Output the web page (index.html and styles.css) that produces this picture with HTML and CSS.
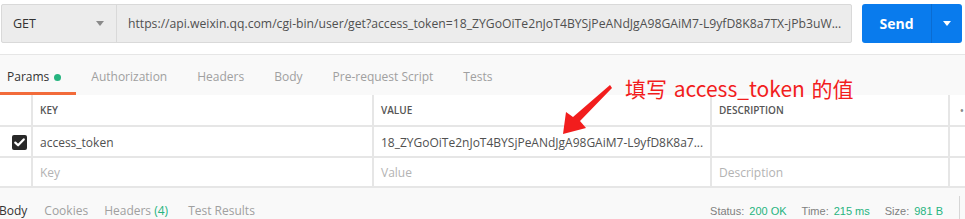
FILE: index.html
```html
<!DOCTYPE html>
<html lang="zh">
<head>
<meta charset="utf-8">
<title>Postman</title>
<link rel="stylesheet" href="styles.css">
</head>
<body>
<div class="page">
  <div class="topbar">
    <div class="req">
      <div class="method"><span>GET</span><span class="caret caret-gray"></span></div>
      <div class="url">https://api.weixin.qq.com/cgi-bin/user/get?access_token=18_ZYGoOiTe2nJoT4BYSjPeANdJgA98GAiM7-L9yfD8K8a7TX-jPb3uW...</div>
    </div>
    <div class="send">
      <span class="send-label">Send</span>
      <span class="send-drop"><span class="caret caret-white"></span></span>
    </div>
  </div>

  <div class="tabs">
    <div class="tab active">Params<span class="dot"></span></div>
    <div class="tab">Authorization</div>
    <div class="tab">Headers</div>
    <div class="tab">Body</div>
    <div class="tab">Pre-request Script</div>
    <div class="tab">Tests</div>
  </div>

  <div class="table">
    <div class="cell"></div>
    <div class="cell head">KEY</div>
    <div class="cell head">VALUE</div>
    <div class="cell head">DESCRIPTION</div>
    <div class="cell head more">•</div>

    <div class="cell check-cell"><span class="checkbox"><svg width="11" height="9" viewBox="0 0 11 9"><path d="M1.3 4.6 L4.1 7.3 L9.7 1.4" fill="none" stroke="#fff" stroke-width="2.2" stroke-linecap="round" stroke-linejoin="round"/></svg></span></div>
    <div class="cell row1">access_token</div>
    <div class="cell row1">18_ZYGoOiTe2nJoT4BYSjPeANdJgA98GAiM7-L9yfD8K8a7...</div>
    <div class="cell"></div>
    <div class="cell"></div>

    <div class="cell"></div>
    <div class="cell ph">Key</div>
    <div class="cell ph">Value</div>
    <div class="cell ph">Description</div>
    <div class="cell"></div>
  </div>

  <div class="resbar">
    <div class="restabs">
      <span class="rtab active">Body</span>
      <span class="rtab r-cookies">Cookies</span>
      <span class="rtab r-headers">Headers <span class="green">(4)</span></span>
      <span class="rtab r-tests">Test Results</span>
    </div>
    <div class="stats">
      <span class="stat"><span class="lbl">Status:</span><span class="green">200 OK</span></span>
      <span class="stat"><span class="lbl">Time:</span><span class="green">215 ms</span></span>
      <span class="stat"><span class="lbl">Size:</span><span class="green">981 B</span></span>
      <span class="vline"></span>
    </div>
  </div>

  <div class="note">填写 access_token 的值</div>
  <svg class="arrow" width="60" height="60" viewBox="555 80 60 60">
    <polygon points="610,85 612,88 580,121 586,128 563,134 566,112 573,117" fill="#f21d1d"/>
  </svg>
</div>
</body>
</html>
```

FILE: styles.css
```css
html, body {
  margin: 0;
  padding: 0;
}
body {
  background: #f9f9f9;
  font-family: "Open Sans", "Noto Sans", sans-serif;
  font-size: 12px;
  color: #505050;
  width: 965px;
  height: 219px;
  overflow: hidden;
}
.page {
  position: relative;
  width: 965px;
  height: 219px;
  overflow: hidden;
}

/* top bar */
.topbar {
  display: flex;
  background: #fff;
  padding: 4px 3px 11px 1px;
  border-bottom: 1px solid #e6e6e6;
}
.req {
  display: flex;
  width: 851px;
  height: 39px;
  box-sizing: border-box;
  border: 1px solid #d9d9d9;
  border-radius: 2px;
  background: #ececec;
}
.method {
  width: 115px;
  box-sizing: border-box;
  border-right: 1px solid #d9d9d9;
  display: flex;
  align-items: center;
  justify-content: space-between;
  padding: 0 12px 0 11px;
  font-size: 12.5px;
  color: #333;
}
.caret {
  width: 0;
  height: 0;
  border-left: 4px solid transparent;
  border-right: 4px solid transparent;
}
.caret-gray { border-top: 5px solid #8a8a8a; }
.caret-white { border-top: 5px solid #fff; }
.url {
  flex: 1;
  display: flex;
  align-items: center;
  padding-left: 11px;
  white-space: nowrap;
  overflow: hidden;
  font-size: 12.2px;
  color: #505050;
}
.send {
  margin-left: 10px;
  width: 100px;
  height: 39px;
  display: flex;
  background: #097bed;
  border-radius: 3px;
  color: #fff;
}
.send-label {
  width: 69px;
  display: flex;
  align-items: center;
  justify-content: center;
  font-weight: 700;
  font-size: 14px;
  border-right: 1px solid #0a6cd2;
}
.send-drop {
  flex: 1;
  display: flex;
  align-items: center;
  justify-content: center;
}

/* tabs */
.tabs {
  display: flex;
  height: 40px;
}
.tab {
  padding: 13px 15px 6px 15px;
  line-height: 18px;
  color: #a0a0a0;
  display: flex;
  align-items: center;
  border-bottom: 3px solid transparent;
}
.tab.active {
  color: #333;
  padding-left: 7px;
  border-bottom-color: #f26b3a;
}
.dot {
  display: inline-block;
  width: 7px;
  height: 7px;
  border-radius: 50%;
  background: #26b47f;
  margin-left: 5px;
}

/* params table */
.table {
  display: grid;
  grid-template-columns: 31px 339px 336px 236px 1fr;
  grid-template-rows: 30px 29px 28px;
  column-gap: 2px;
  row-gap: 2px;
  background: #e6e6e6;
  padding-bottom: 2px;
}
.cell {
  background: #fff;
  display: flex;
  align-items: center;
  padding-left: 7px;
  white-space: nowrap;
  overflow: hidden;
  color: #505050;
}
.row1 { padding-top: 2px; }
.head {
  font-size: 10px;
  font-weight: 600;
  color: #555;
  padding-left: 7px;
}
.more {
  padding-left: 10px;
  color: #888;
}
.ph { color: #b3b3b3; }
.check-cell {
  padding-left: 12px;
  padding-top: 2px;
}
.checkbox {
  width: 15px;
  height: 15px;
  border-radius: 2px;
  background: #282828;
  display: flex;
  align-items: center;
  justify-content: center;
}

/* response bar */
.resbar {
  display: flex;
  justify-content: space-between;
  padding-top: 14px;
  line-height: 18px;
}
.restabs {
  display: flex;
  margin-left: -1px;
}
.rtab { color: #a0a0a0; }
.rtab.active { color: #333; }
.r-cookies { margin-left: 17px; }
.r-headers { margin-left: 16px; }
.r-tests { margin-left: 20px; }
.green { color: #26b47f; }
.stats {
  display: flex;
  align-items: flex-start;
  font-family: "Liberation Sans", Arial, sans-serif;
  font-size: 11px;
  color: #808080;
}
.lbl { margin-right: 5px; }
.stat { margin-right: 15px; }
.stat:nth-child(3) { margin-right: 16px; }
.vline {
  width: 1px;
  height: 24px;
  margin-top: -6px;
  background: #d6d6d6;
  margin-right: 5px;
}

/* annotation */
.note {
  position: absolute;
  left: 625px;
  top: 75px;
  font-family: "Noto Sans CJK SC", "Noto Sans", sans-serif;
  font-size: 21px;
  line-height: 26px;
  word-spacing: 2px;
  color: #f21d1d;
  white-space: nowrap;
}
.arrow {
  position: absolute;
  left: 555px;
  top: 80px;
}
```
